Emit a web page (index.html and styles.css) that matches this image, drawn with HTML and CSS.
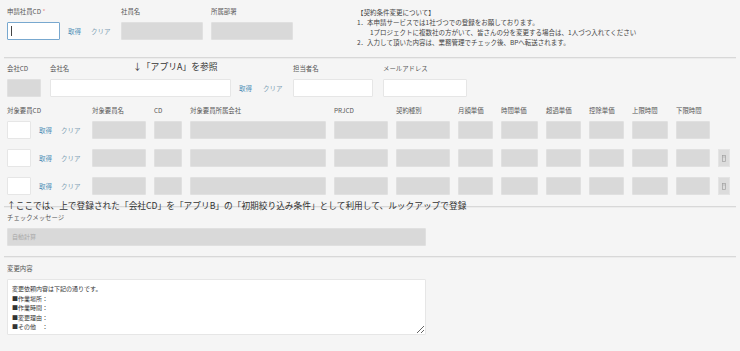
FILE: index.html
```
<!DOCTYPE html>
<html lang="ja">
<head>
<meta charset="utf-8">
<title>契約条件変更</title>
<link rel="stylesheet" href="styles.css">
</head>
<body>
<div class="page">
  <section class="sec sec1">
    <div class="field f-emp">
      <div class="lbl">申請社員CD <span class="req">*</span></div>
      <div class="ctl">
        <div class="box focus w53"><span class="caret"></span></div>
        <span class="lnk get">取得</span>
        <span class="lnk clr">クリア</span>
      </div>
    </div>
    <div class="field f-name">
      <div class="lbl">社員名</div>
      <div class="ctl"><div class="box ro w82"></div></div>
    </div>
    <div class="field f-dept">
      <div class="lbl">所属部署</div>
      <div class="ctl"><div class="box ro w82"></div></div>
    </div>
    <div class="notes">
      <div>【契約条件変更について】</div>
      <div>1．本申請サービスでは1社づつでの登録をお願しております。</div>
      <div class="indent">1プロジェクトに複数社の方がいて、皆さんの分を変更する場合は、1人づつ入れてください</div>
      <div>2．入力して頂いた内容は、業務管理でチェック後、BPへ転送されます。</div>
    </div>
  </section>
  <div class="sep"></div>

  <section class="sec sec2">
    <div class="field f-ccd">
      <div class="lbl">会社CD</div>
      <div class="ctl"><div class="box ro w34"></div></div>
    </div>
    <div class="field f-cname">
      <div class="lbl">会社名</div>
      <div class="ctl">
        <div class="box w181"></div>
        <span class="lnk get">取得</span>
        <span class="lnk clr clr2">クリア</span>
      </div>
    </div>
    <div class="field f-tanto">
      <div class="lbl">担当者名</div>
      <div class="ctl"><div class="box w80"></div></div>
    </div>
    <div class="field">
      <div class="lbl">メールアドレス</div>
      <div class="ctl"><div class="box w84"></div></div>
    </div>
    <div class="note-a">↓「アプリA」を参照</div>
  </section>

  <section class="sec sec3">
    <div class="cols head">
      <div class="lbl">対象要員CD</div>
      <div class="lbl">対象要員名</div>
      <div class="lbl">CD</div>
      <div class="lbl">対象要員所属会社</div>
      <div class="lbl">PRJCD</div>
      <div class="lbl">契約種別</div>
      <div class="lbl">月額単価</div>
      <div class="lbl">時間単価</div>
      <div class="lbl">超過単価</div>
      <div class="lbl">控除単価</div>
      <div class="lbl">上限時間</div>
      <div class="lbl">下限時間</div>
      <div></div>
    </div>
    <div class="cols rows">
      <div class="ctl"><div class="box w24"></div><span class="lnk get g2">取得</span><span class="lnk clr c3">クリア</span></div>
      <div class="box ro"></div><div class="box ro"></div><div class="box ro"></div><div class="box ro"></div><div class="box ro"></div><div class="box ro"></div><div class="box ro"></div><div class="box ro"></div><div class="box ro"></div><div class="box ro"></div><div class="box ro"></div>
      <div></div>

      <div class="ctl"><div class="box w24"></div><span class="lnk get g2">取得</span><span class="lnk clr c3">クリア</span></div>
      <div class="box ro"></div><div class="box ro"></div><div class="box ro"></div><div class="box ro"></div><div class="box ro"></div><div class="box ro"></div><div class="box ro"></div><div class="box ro"></div><div class="box ro"></div><div class="box ro"></div><div class="box ro"></div>
      <div class="rowbtn"><svg width="4" height="7" viewBox="0 0 4 7"><rect x="0.5" y="0.5" width="3" height="6" fill="none" stroke="#a0a0a0" stroke-width="0.7"/><line x1="0.5" y1="2" x2="3.5" y2="2" stroke="#a0a0a0" stroke-width="0.5"/></svg></div>

      <div class="ctl"><div class="box w24"></div><span class="lnk get g2">取得</span><span class="lnk clr c3">クリア</span></div>
      <div class="box ro"></div><div class="box ro"></div><div class="box ro"></div><div class="box ro"></div><div class="box ro"></div><div class="box ro"></div><div class="box ro"></div><div class="box ro"></div><div class="box ro"></div><div class="box ro"></div><div class="box ro"></div>
      <div class="rowbtn"><svg width="4" height="7" viewBox="0 0 4 7"><rect x="0.5" y="0.5" width="3" height="6" fill="none" stroke="#a0a0a0" stroke-width="0.7"/><line x1="0.5" y1="2" x2="3.5" y2="2" stroke="#a0a0a0" stroke-width="0.5"/></svg></div>
    </div>
  </section>
  <div class="sep sep-note"><div class="note-b">↑ここでは、上で登録された「会社CD」を「アプリB」の「初期絞り込み条件」として利用して、ルックアップで登録</div></div>

  <section class="sec sec4">
    <div class="field">
      <div class="lbl">チェックメッセージ</div>
      <div class="box ro w419 calc">自動計算</div>
    </div>
  </section>
  <div class="sep sep3"></div>

  <section class="sec sec5">
    <div class="field">
      <div class="lbl">変更内容</div>
      <textarea class="memo" readonly>変更依頼内容は下記の通りです。
■作業場所：
■作業時間：
■変更理由：
■その他　：</textarea>
    </div>
  </section>
</div>
</body>
</html>
```

FILE: styles.css
```
* { box-sizing: border-box; }
html, body { margin: 0; padding: 0; }
body {
  background: #f5f5f5;
  font-family: "Noto Sans CJK JP", "Noto Sans", sans-serif;
  color: #555;
  font-size: 6px;
  width: 740px;
  height: 351px;
  overflow: hidden;
}
.page { width: 740px; }

.lbl {
  font-size: 6.4px;
  line-height: 10px;
  height: 10px;
  color: #555;
  white-space: nowrap;
}
.req { color: #e88a8a; }

.field { display: flex; flex-direction: column; gap: 5px; }
.ctl { display: flex; align-items: center; height: 18px; }

.box {
  height: 18px;
  background: #fff;
  border: 1px solid #e6e6e6;
  border-radius: 1px;
}
.box.ro { background: #d9d9d9; border-color: #e0e0e0; }
.box.focus { border-color: #78a8cf; display: flex; align-items: center; }
.caret { display: block; width: 1px; height: 10px; background: #444; margin-left: 3px; }

.w24 { width: 24px; }
.w34 { width: 34px; }
.w53 { width: 53px; }
.w80 { width: 80px; }
.w82 { width: 82px; }
.w84 { width: 84px; }
.w181 { width: 181px; }
.w419 { width: 419px; }

.lnk { font-size: 6.5px; line-height: 10px; white-space: nowrap; }
.lnk.get { color: #4b8db6; margin-left: 8px; }
.lnk.clr { color: #80a0b4; margin-left: 10px; }
.lnk.clr2 { margin-left: 11px; }
.lnk.g2 { margin-left: 8px; }
.lnk.c3 { margin-left: 9px; }

.sep {
  margin: 0 4px;
  height: 2px;
  border-top: 1px solid #d8d8d8;
  border-bottom: 1px solid #ececec;
}

/* section 1 */
.sec1 { display: flex; align-items: flex-start; padding: 7px 0 0 7px; height: 57px; }
.f-emp { width: 114px; }
.f-name { width: 90px; }
.f-dept { width: 82px; }
.notes {
  margin-left: 64px;
  font-size: 6.5px;
  line-height: 10px;
  color: #444;
  white-space: nowrap;
}
.notes .indent { padding-left: 13px; }

/* section 2 */
.sec2 { position: relative; display: flex; padding: 5px 0 0 7px; }
.f-ccd { width: 43px; }
.f-cname { width: 243px; }
.f-tanto { width: 90px; }
.note-a {
  position: absolute;
  left: 133px;
  top: 2px;
  font-size: 8.8px;
  line-height: 12px;
  color: #333;
  white-space: nowrap;
}

/* section 3 */
.sec3 { padding: 9px 0 0 7px; }
.cols {
  display: grid;
  grid-template-columns: 77px 54px 28px 136px 54px 54px 35px 37px 35px 35px 36px 34px 12px;
  column-gap: 8px;
}
.head { margin-bottom: 5px; }
.rows { grid-auto-rows: 18px; row-gap: 10px; }
.rowbtn {
  height: 18px;
  background: #dcdcdc;
  border: 1px solid #e4e4e4;
  display: flex;
  align-items: center;
  justify-content: center;
}

.sep-note { position: relative; margin-top: 11px; }
.note-b {
  position: absolute;
  left: 3px;
  top: -7px;
  font-size: 8.7px;
  line-height: 12px;
  color: #333;
  white-space: nowrap;
}

/* section 4 */
.sec4 { padding: 5px 0 0 7px; }
.calc {
  font-size: 6px;
  line-height: 16px;
  padding-left: 4px;
  color: #a8a8a8;
}
.sep3 { margin-top: 10px; }

/* section 5 */
.sec5 { padding: 6px 0 0 7px; }
.memo {
  display: block;
  width: 419px;
  height: 56px;
  margin: 0;
  padding: 4px 4px;
  background: #fff;
  border: 1px solid #e6e6e6;
  border-radius: 1px;
  font-family: "Noto Sans CJK JP", "Noto Sans", sans-serif;
  font-size: 6px;
  line-height: 9.5px;
  color: #333;
  overflow: hidden;
  resize: both;
  outline: none;
}
```
